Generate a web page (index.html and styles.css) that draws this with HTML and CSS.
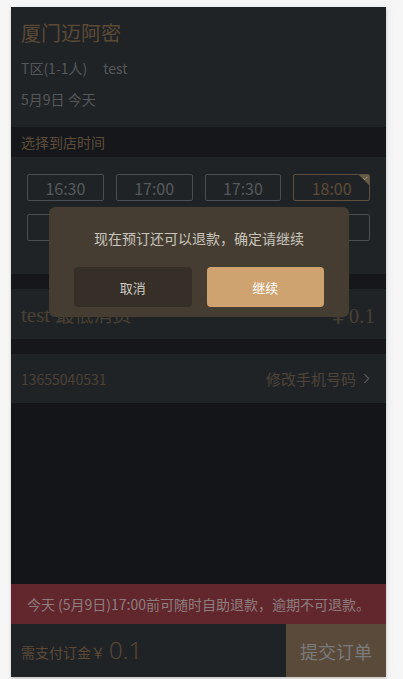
FILE: index.html
```html
<!DOCTYPE html>
<html lang="zh">
<head>
<meta charset="utf-8">
<link rel="stylesheet" href="styles.css">
</head>
<body>
<div class="frame">
  <header class="shop">
    <div class="shop-name">厦门迈阿密</div>
    <div class="shop-line">T区(1-1人)<span class="table-name">test</span></div>
    <div class="shop-line">5月9日 今天</div>
  </header>
  <div class="label-bar">选择到店时间</div>
  <section class="slots">
    <div class="slot">16:30</div>
    <div class="slot">17:00</div>
    <div class="slot">17:30</div>
    <div class="slot selected">18:00<span class="corner"><svg viewBox="0 0 10 10" width="10" height="10"><path d="M0 0H10V10Z" fill="#6b5a43"/><path d="M4.3 3.2L5.8 4.6L8.6 1.7" fill="none" stroke="#9a9a9a" stroke-width="1"/></svg></span></div>
    <div class="slot"></div>
    <div class="slot"></div>
    <div class="slot"></div>
    <div class="slot"></div>
  </section>
  <div class="gap"></div>
  <div class="item-row">
    <span class="serif">test <span class="cjk">最低消费</span></span>
    <span class="serif">￥0.1</span>
  </div>
  <div class="gap"></div>
  <div class="phone-row">
    <span>13655040531</span>
    <span class="edit">修改手机号码 <svg class="chev" viewBox="0 0 8 12" width="7" height="11"><path d="M1.5 1L6.5 6L1.5 11" fill="none" stroke="#55585b" stroke-width="1.4"/></svg></span>
  </div>
  <div class="filler"></div>
  <div class="notice">今天 (5月9日)17:00前可随时自助退款，逾期不可退款。</div>
  <footer class="pay-bar">
    <div class="pay-info"><span class="pay-label">需支付订金￥</span><span class="pay-amount">0.1</span></div>
    <div class="submit">提交订单</div>
  </footer>

  <div class="modal">
    <div class="modal-text">现在预订还可以退款，确定请继续</div>
    <div class="modal-actions">
      <div class="btn cancel">取消</div>
      <div class="btn ok">继续</div>
    </div>
  </div>
</div>
</body>
</html>
```

FILE: styles.css
```css
html, body {
  margin: 0;
  padding: 0;
}
body {
  background: #f6f6f6;
  font-family: "Noto Sans CJK SC", "Noto Sans", sans-serif;
  height: 679px;
  overflow: hidden;
}
.frame {
  position: relative;
  margin: 7px 0 0 11px;
  width: 375px;
  height: 670px;
  background: #131518;
  display: flex;
  flex-direction: column;
  box-shadow: 0 2px 3px rgba(0,0,0,0.18), 3px 0 8px rgba(0,0,0,0.04);
}
.shop {
  background: #202326;
  padding: 12px 10px 18px;
  height: 120px;
  box-sizing: border-box;
}
.shop-name {
  font-size: 20px;
  line-height: 28px;
  color: #5b4a35;
}
.shop-line {
  margin-top: 11px;
  font-size: 14px;
  line-height: 20px;
  color: #55585b;
}
.table-name {
  margin-left: 16px;
}
.label-bar {
  height: 30px;
  line-height: 30px;
  padding: 0 10px;
  font-size: 14px;
  color: #5c4d3a;
  background: #15171a;
}
.slots {
  background: #202326;
  padding: 17px 16px 0;
  height: 117px;
  box-sizing: border-box;
  display: grid;
  grid-template-columns: repeat(4, 1fr);
  grid-auto-rows: 27px;
  gap: 13px 12px;
}
.slot {
  position: relative;
  border: 1px solid #4b4e51;
  border-radius: 2px;
  color: #56595c;
  font-size: 16px;
  display: flex;
  align-items: center;
  justify-content: center;
  box-sizing: border-box;
}
.slot.selected {
  border-color: #5f5040;
  color: #5c4b37;
}
.corner {
  position: absolute;
  top: 0;
  right: 0;
  width: 10px;
  height: 10px;
  line-height: 0;
}
.gap {
  height: 15px;
  background: #15171a;
}
.item-row {
  height: 50px;
  background: #202326;
  padding: 0 11px 0 10px;
  display: flex;
  align-items: center;
  justify-content: space-between;
  color: #4a4034;
  font-size: 21px;
}
.serif {
  font-family: "Liberation Serif", "Noto Sans CJK SC", serif;
}
.cjk {
  font-family: "Noto Sans CJK SC", sans-serif;
  font-size: 19px;
}
.phone-row {
  height: 49px;
  background: #202326;
  padding: 0 16px 0 10px;
  display: flex;
  align-items: center;
  justify-content: space-between;
  font-size: 14px;
  color: #4b4136;
}
.edit {
  display: flex;
  align-items: center;
  gap: 7px;
  font-size: 15px;
  color: #4e4439;
}
.filler {
  flex: 1;
  background: #131518;
}
.notice {
  height: 40px;
  background: #62272c;
  color: #8e7d7f;
  font-size: 14px;
  display: flex;
  align-items: center;
  justify-content: center;
}
.pay-bar {
  height: 53px;
  display: flex;
  background: #202326;
}
.pay-info {
  flex: 1;
  display: flex;
  align-items: center;
  padding-left: 10px;
  color: #5b4a37;
}
.pay-label {
  font-size: 14px;
  margin-top: 3px;
}
.pay-amount {
  font-size: 24px;
  font-family: "Open Sans", "Noto Sans", sans-serif;
  font-weight: 300;
  margin-left: 4px;
  margin-top: -3px;
}
.submit {
  width: 100px;
  background: #5a4a3a;
  color: #7b7b7b;
  font-size: 18px;
  display: flex;
  align-items: center;
  justify-content: center;
}
.modal {
  position: absolute;
  left: 38px;
  top: 200px;
  width: 300px;
  height: 110px;
  box-sizing: border-box;
  background: #453d32;
  border-radius: 6px;
  padding: 21px 25px 10px;
  display: flex;
  flex-direction: column;
}
.modal-text {
  font-size: 14px;
  line-height: 20px;
  color: #c9c5bd;
  text-align: center;
}
.modal-actions {
  margin-top: auto;
  display: flex;
  gap: 15px;
}
.btn {
  flex: 1;
  height: 40px;
  border-radius: 4px;
  font-size: 13px;
  display: flex;
  align-items: center;
  justify-content: center;
}
.cancel {
  background: #352f28;
  color: #cfcbc5;
}
.ok {
  background: #cfa36f;
  color: #ffffff;
}
```
